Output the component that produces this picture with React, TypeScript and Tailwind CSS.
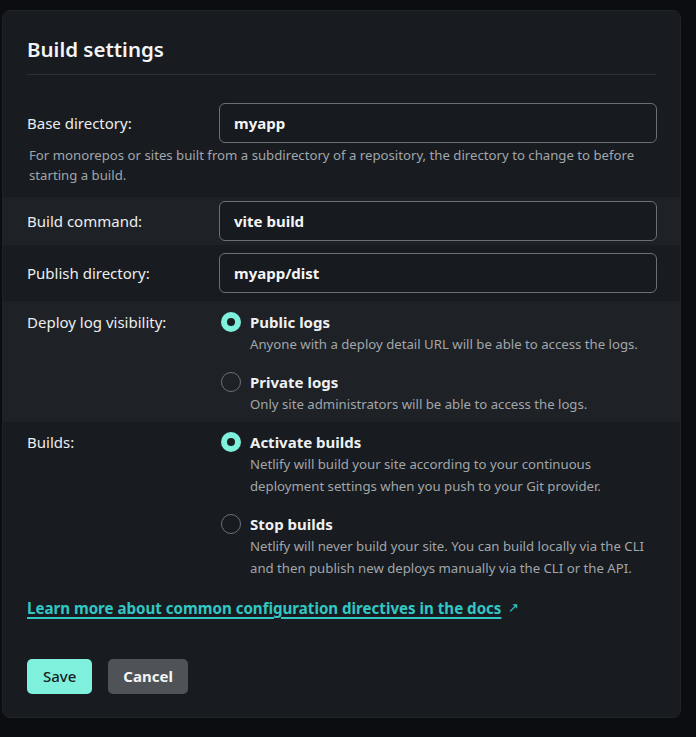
import React from "react";

const font = { fontFamily: '"Noto Sans", "Open Sans", sans-serif' };

function Radio({ checked }: { checked: boolean }) {
  return checked ? (
    <span className="mt-[1px] flex h-[20px] w-[20px] shrink-0 items-center justify-center rounded-full bg-[#7ff0dc]">
      <span className="h-[8px] w-[8px] rounded-full bg-[#1a1d21]" />
    </span>
  ) : (
    <span className="mt-[1px] h-[20px] w-[20px] shrink-0 rounded-full border-[1.5px] border-[#6d7177]" />
  );
}

function Option({ checked, title, desc }: { checked: boolean; title: string; desc: React.ReactNode }) {
  return (
    <div className="flex gap-[9px]">
      <Radio checked={checked} />
      <div>
        <div className="text-[15px] font-bold leading-[22px] text-[#eef0f2]">{title}</div>
        <div className="text-[13.2px] leading-[22px] text-[#a1a6ab]">{desc}</div>
      </div>
    </div>
  );
}

function Input({ value }: { value: string }) {
  return (
    <div className="flex h-[40px] items-center rounded-[6px] border border-[#6b7078] bg-[#171a1e] px-[14px] text-[15px] font-bold text-[#f4f5f6]">
      {value}
    </div>
  );
}

export default function App() {
  return (
    <div className="min-h-screen bg-[#0b0d10] pl-[2px] pr-[15px] pt-[10px]" style={font}>
      <div className="h-[708px] overflow-hidden rounded-[8px] border border-[#1f2227] bg-[#181b1f]">
        <div className="px-[24px] pt-[22px]">
          <h2 className="text-[20.5px] font-semibold leading-[32px] text-[#f3f4f5]">Build settings</h2>
          <div className="mt-[9px] h-px bg-[#2d3136]" />
        </div>

        <div className="grid grid-cols-[192px_1fr] items-center pl-[24px] pr-[23px] pt-[28px]">
          <div className="text-[15px] text-[#eceef0]">Base directory:</div>
          <Input value="myapp" />
        </div>
        <div className="px-[26px] pb-[12px] pt-[2px] text-[13.2px] leading-[20px] text-[#a1a6ab]">
          For monorepos or sites built from a subdirectory of a repository, the directory to change to before starting a build.
        </div>

        <div className="grid grid-cols-[192px_1fr] items-center bg-[#1e2125] py-[4px] pl-[24px] pr-[23px]">
          <div className="text-[15px] text-[#eceef0]">Build command:</div>
          <Input value="vite build" />
        </div>

        <div className="grid grid-cols-[192px_1fr] items-center py-[8px] pl-[24px] pr-[23px]">
          <div className="text-[15px] text-[#eceef0]">Publish directory:</div>
          <Input value="myapp/dist" />
        </div>

        <div className="grid grid-cols-[194px_1fr] bg-[#1e2125] pb-[7px] pl-[24px] pr-[23px] pt-[10px]">
          <div className="text-[15px] leading-[22px] text-[#eceef0]">Deploy log visibility:</div>
          <div className="flex flex-col gap-[16px]">
            <Option checked title="Public logs" desc="Anyone with a deploy detail URL will be able to access the logs." />
            <Option checked={false} title="Private logs" desc="Only site administrators will be able to access the logs." />
          </div>
        </div>

        <div className="grid grid-cols-[194px_1fr] pl-[24px] pr-[23px] pt-[9px]">
          <div className="text-[15px] leading-[22px] text-[#eceef0]">Builds:</div>
          <div className="flex flex-col gap-[16px]">
            <Option
              checked
              title="Activate builds"
              desc={<>Netlify will build your site according to your continuous<br />deployment settings when you push to your Git provider.</>}
            />
            <Option
              checked={false}
              title="Stop builds"
              desc={<>Netlify will never build your site. You can build locally via the CLI<br />and then publish new deploys manually via the CLI or the API.</>}
            />
          </div>
        </div>

        <div className="flex items-center gap-[7px] px-[24px] pt-[18px]">
          <a className="text-[15.1px] font-bold leading-[22px] text-[#32c6c4] underline decoration-[1.5px] underline-offset-[3px]">
            Learn more about common configuration directives in the docs
          </a>
          <span className="text-[13px] text-[#32c6c4]">↗</span>
        </div>

        <div className="flex gap-[16px] px-[24px] pt-[40px]">
          <button className="h-[35px] rounded-[5px] bg-[#7ff0dc] px-[16px] text-[15px] font-medium text-[#1a1d21]">Save</button>
          <button className="h-[35px] rounded-[5px] bg-[#4f5358] px-[15px] text-[15px] font-bold text-[#f4f5f6]">Cancel</button>
        </div>
      </div>
    </div>
  );
}
